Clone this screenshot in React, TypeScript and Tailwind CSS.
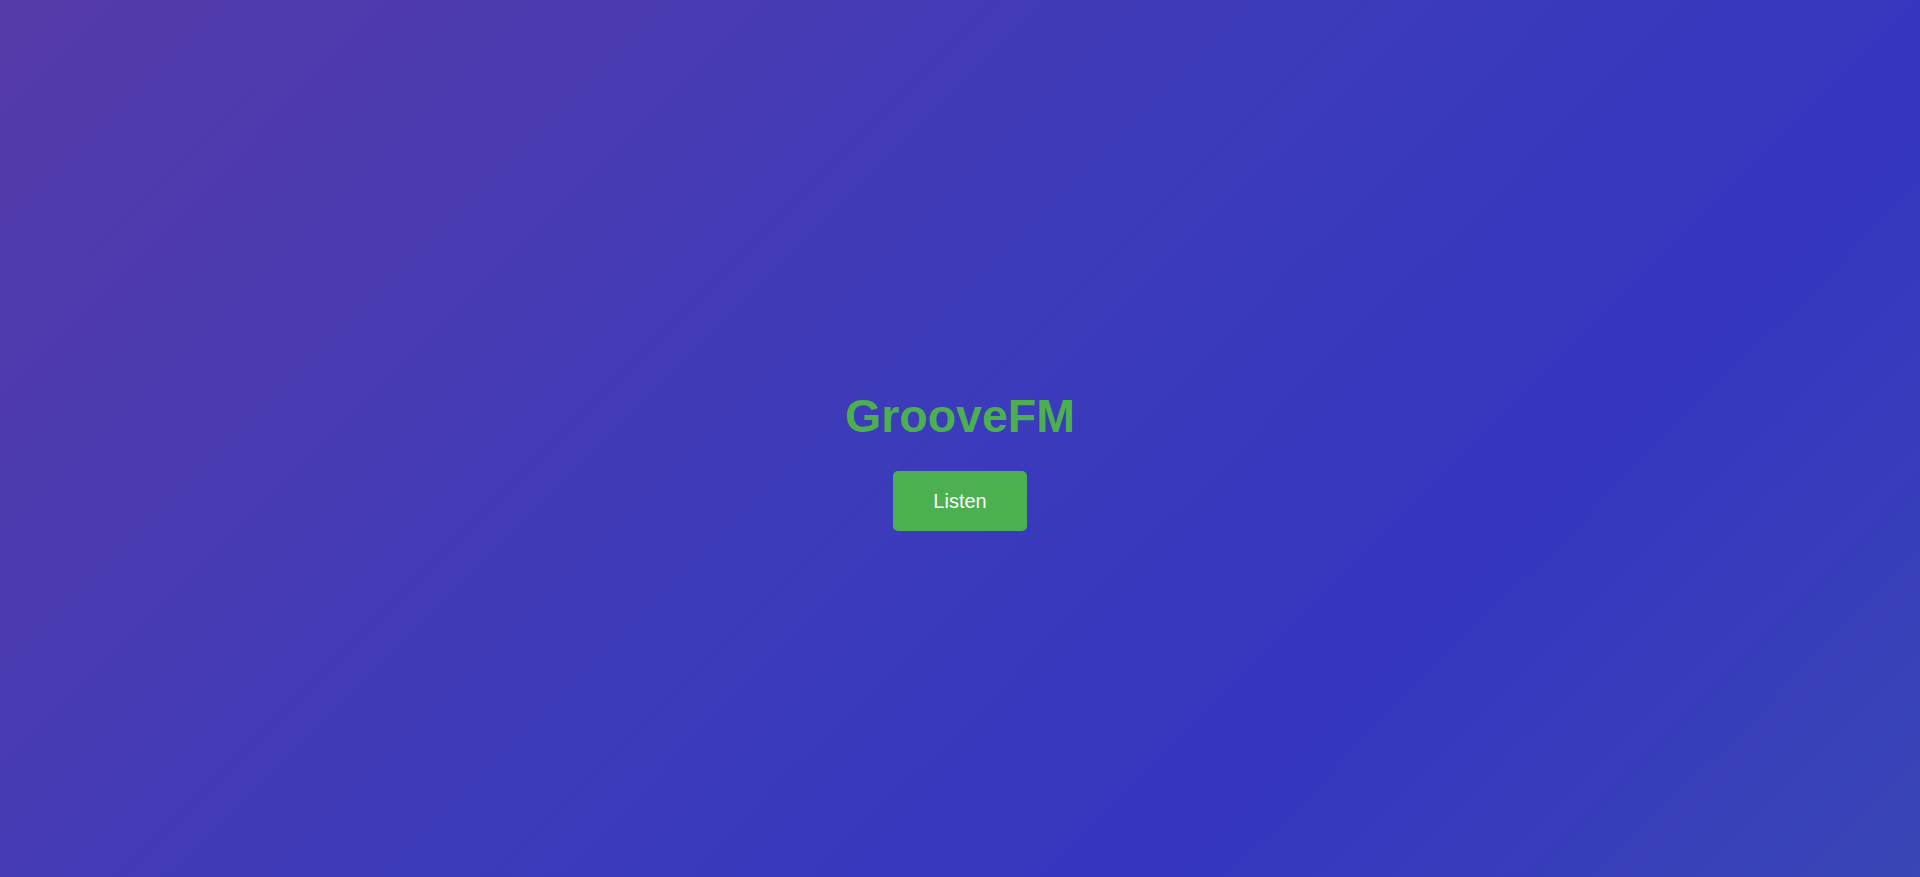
export default function App() {
  return (
    <div className="min-h-screen w-full flex flex-col items-center justify-center bg-[linear-gradient(135deg,#563aa9_0%,#3b3bbb_50%,#3535c0_72%,#3a46b5_100%)] font-['Liberation_Sans',Arial,sans-serif]">
      <h1 className="mt-[42px] mb-[27px] text-[46.5px] leading-[56px] font-bold text-[#4caf50]">GrooveFM</h1>
      <button className="px-10 py-[15px] text-[20px] leading-[30px] text-white bg-[#4caf50] rounded-[5px]">
        Listen
      </button>
    </div>
  );
}
